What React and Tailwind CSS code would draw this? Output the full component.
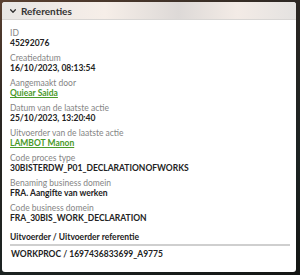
import React from "react";

const rows = [
  { label: "ID", value: "45292076" },
  { label: "Creatiedatum", value: "16/10/2023, 08:13:54" },
  { label: "Aangemaakt door", value: "Quiear Saida", link: true },
  { label: "Datum van de laatste actie", value: "25/10/2023, 13:20:40" },
  { label: "Uitvoerder van de laatste actie", value: "LAMBOT Manon", link: true },
  { label: "Code proces type", value: "30BISTERDW_P01_DECLARATIONOFWORKS" },
  { label: "Benaming business domein", value: "FRA. Aangifte van werken" },
  { label: "Code business domein", value: "FRA_30BIS_WORK_DECLARATION" },
];

export default function App() {
  return (
    <div
      className="w-[300px] h-[275px] overflow-hidden bg-[linear-gradient(160deg,#5a4030_0%,#2a2622_30%,#1c2322_70%,#141614_100%)] pt-[2px] pl-[2px] pr-[4px] pb-[3px]"
      style={{ fontFamily: "Lato, 'Open Sans', sans-serif" }}
    >
      <div className="h-full rounded-[3px] bg-white overflow-hidden flex flex-col">
        <div className="h-[18px] shrink-0 flex items-center gap-[4px] pl-[7px] border-b border-[#d8d6d4] bg-[linear-gradient(90deg,#e8e6e4_0%,#f6eee8_35%,#ddd9d7_60%,#f3ebe6_80%,#e4e2e0_100%)]">
          <svg width="8" height="8" viewBox="0 0 10 10" className="text-[#333]">
            <path d="M2 3.5 L5 6.5 L8 3.5" fill="none" stroke="currentColor" strokeWidth="1.6" strokeLinecap="round" strokeLinejoin="round" />
          </svg>
          <span className="text-[10px] font-bold text-[#333] leading-none">Referenties</span>
        </div>
        <div className="flex flex-col pt-[8px] px-[8px]">
          <div className="flex flex-col gap-[5px]">
            {rows.map((r) => (
              <div key={r.label} className="flex flex-col">
                <div className="text-[8.5px] leading-[10px] text-[#858585]">{r.label}</div>
                <div
                  className={
                    r.link
                      ? "text-[8.5px] leading-[10px] font-bold text-[#4a9a2a] underline"
                      : "text-[8.5px] leading-[10px] font-bold text-[#222]"
                  }
                >
                  {r.value}
                </div>
              </div>
            ))}
          </div>
          <div className="mt-[9px] text-[8.5px] leading-[10px] font-bold text-[#222]">
            Uitvoerder / Uitvoerder referentie
          </div>
          <div className="mt-[2px] h-[2px] bg-[#cfcfcf] mr-[-2px]" />
          <div className="mt-[3px] text-[8.5px] leading-[10px] font-bold text-[#222] pl-[1px]">
            WORKPROC / 1697436833699_A9775
          </div>
        </div>
      </div>
    </div>
  );
}
